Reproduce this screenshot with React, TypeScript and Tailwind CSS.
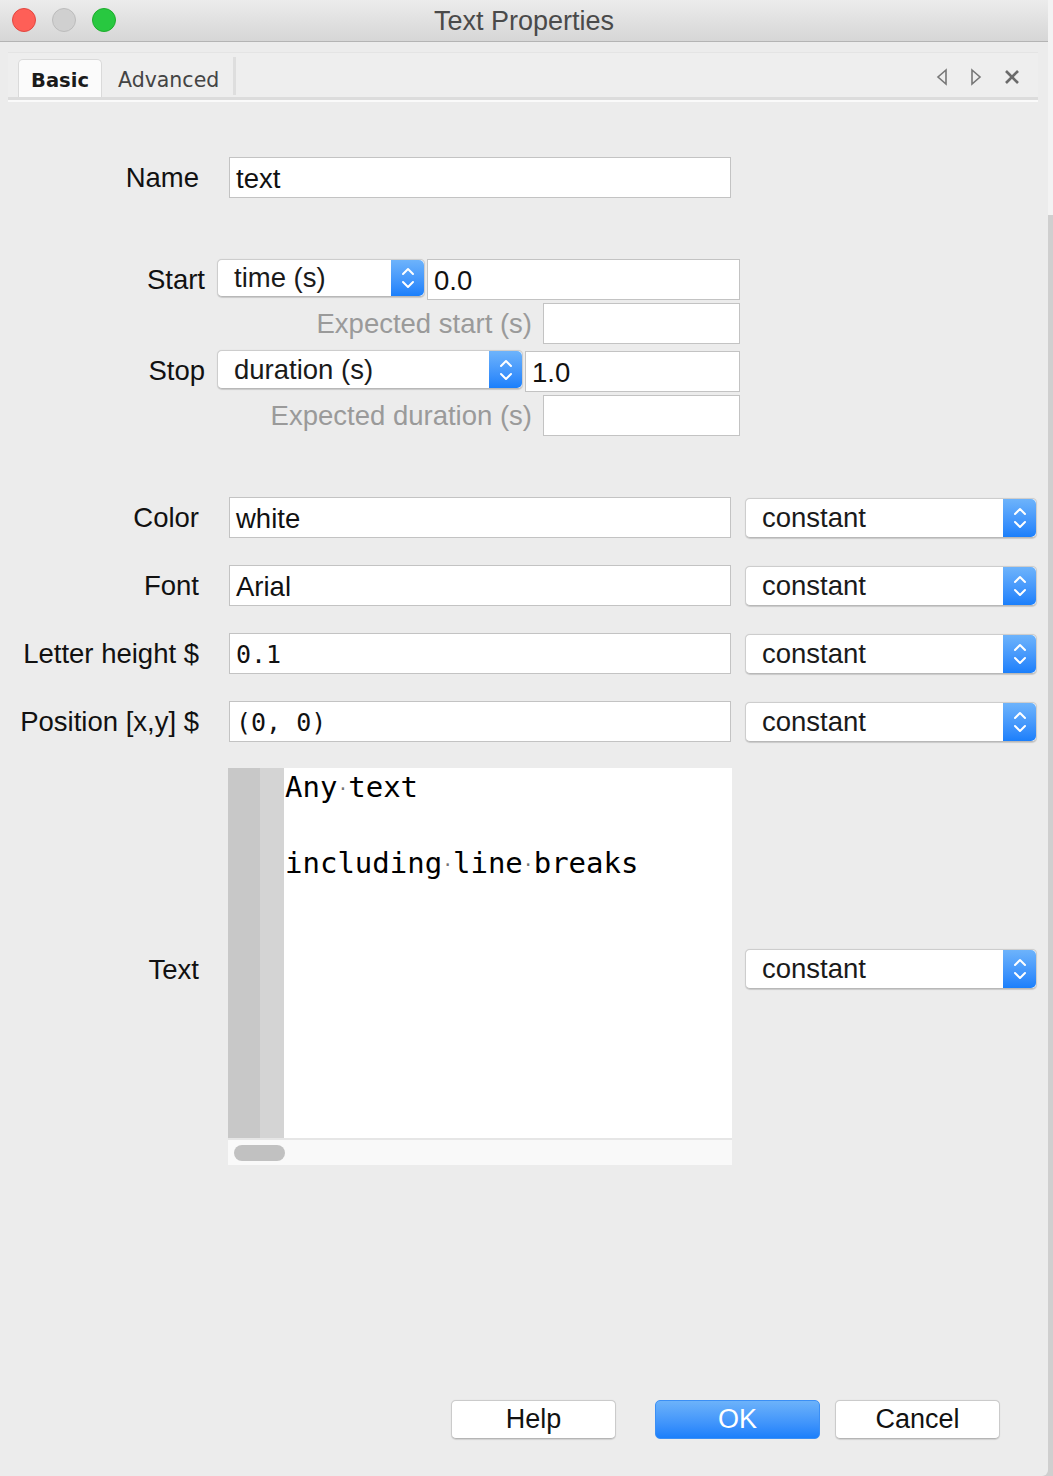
import React from "react";

const ui = "font-['Liberation_Sans','Helvetica',sans-serif]";
const mono = "font-['DejaVu_Sans_Mono','Liberation_Mono',monospace]";

function Stepper() {
  return (
    <div className="w-[33px] h-full flex items-center justify-center rounded-r-[5px] bg-gradient-to-b from-[#6db3fb] to-[#1a7ffb]">
      <svg width="14" height="24" viewBox="0 0 14 24" fill="none" stroke="white" strokeWidth="2" strokeLinecap="round" strokeLinejoin="round">
        <polyline points="2,8 7,3 12,8" />
        <polyline points="2,16 7,21 12,16" />
      </svg>
    </div>
  );
}

function Select({ label, w, h = 40 }: { label: string; w: number; h?: number }) {
  return (
    <div
      className="flex items-stretch bg-white rounded-[5px] border border-[#cdcdcd] border-b-[#b8b8b8] shadow-[0_0.5px_1px_rgba(0,0,0,0.15)] shrink-0"
      style={{ width: w, height: h }}
    >
      <div className="flex-1 flex items-center pl-[16px] text-[27.5px] text-[#1a1a1a]">{label}</div>
      <Stepper />
    </div>
  );
}

function Field({ value, w, monoFont = false }: { value: string; w: number; monoFont?: boolean }) {
  return (
    <div
      className={`h-[41px] bg-white border border-[#c3c3c3] flex items-center pl-[6px] text-[#111] shrink-0 ${monoFont ? mono + " text-[25px]" : "text-[27.5px]"}`}
      style={{ width: w }}
    >
      <span className="pt-[3px]">{value}</span>
    </div>
  );
}

function Row({ label, value, monoFont = false, top }: { label: string; value: string; monoFont?: boolean; top: string }) {
  return (
    <div className={`flex items-center ${top}`}>
      <div className="w-[199px] text-right text-[27.5px] leading-[32px] text-[#111] whitespace-nowrap">{label}</div>
      <div className="ml-[30px]">
        <Field value={value} w={502} monoFont={monoFont} />
      </div>
      <div className="ml-[14px]">
        <Select label="constant" w={292} />
      </div>
    </div>
  );
}

function Dot() {
  return <span className="text-[#777] text-[18px] leading-[0] align-middle">·</span>;
}

function Button({ label, primary = false }: { label: string; primary?: boolean }) {
  return (
    <div
      className={`w-[165px] h-[39px] rounded-[5px] flex items-center justify-center text-[27px] ${
        primary
          ? "bg-gradient-to-b from-[#6cb2fa] to-[#1a7ffb] text-white border border-[#3b8ff5]"
          : "bg-white text-[#111] border border-[#cbcbcb] border-b-[#b5b5b5] shadow-[0_0.5px_1px_rgba(0,0,0,0.12)]"
      }`}
    >
      {label}
    </div>
  );
}

export default function App() {
  return (
    <div className={`flex w-[1053px] h-[1476px] bg-[#cfcfcf] ${ui}`}>
      <div className="w-[1048px] h-full bg-[#ececec] flex flex-col rounded-br-[6px] overflow-hidden">
        {/* Title bar */}
        <div className="h-[42px] shrink-0 relative flex items-center justify-center bg-gradient-to-b from-[#ececec] to-[#d6d6d6] border-b border-[#b4b4b4]">
          <div className="absolute left-[12px] top-[8px] flex gap-[16px]">
            <div className="w-[24px] h-[24px] rounded-full bg-[#fe5f57] border border-[#e2463f]" />
            <div className="w-[24px] h-[24px] rounded-full bg-[#d0d0d0] border border-[#bcbcbc]" />
            <div className="w-[24px] h-[24px] rounded-full bg-[#28c840] border border-[#1dad2b]" />
          </div>
          <div className="text-[27px] text-[#4a4a4a] pt-[1px]">Text Properties</div>
        </div>

        {/* Tab bar */}
        <div className="mt-[10px] ml-[8px] w-[1030px] h-[48px] bg-[#eeeeee] border-t border-[#e4e4e4] flex items-end relative">
          <div className="flex items-end h-full w-full border-b-[3px] border-[#dcdcdc]">
            <div className="ml-[10px] w-[84px] h-[38px] bg-[#fbfbfb] border border-[#dadada] border-b-0 rounded-t-[5px] flex items-center justify-center pt-[4px] font-['DejaVu_Sans',sans-serif] font-bold text-[19.5px] text-[#1a1a1a]">
              Basic
            </div>
            <div className="ml-[16px] h-[38px] flex items-center pt-[4px] font-['DejaVu_Sans',sans-serif] text-[20.5px] text-[#444]">
              Advanced
            </div>
            <div className="ml-[14px] mb-[2px] w-[3px] h-[38px] bg-[#dedede]" />
            <div className="ml-auto mr-[18px] h-full flex items-center pt-[4px] gap-[22px] text-[#6e6e6e]">
              <svg width="12" height="18" viewBox="0 0 12 18" fill="none" stroke="#777" strokeWidth="1.6">
                <polygon points="10,2 2,9 10,16" />
              </svg>
              <svg width="12" height="18" viewBox="0 0 12 18" fill="none" stroke="#777" strokeWidth="1.6">
                <polygon points="2,2 10,9 2,16" />
              </svg>
              <svg width="16" height="16" viewBox="0 0 16 16" fill="none" stroke="#6a6a6a" strokeWidth="2.6">
                <line x1="2" y1="2" x2="14" y2="14" />
                <line x1="14" y1="2" x2="2" y2="14" />
              </svg>
            </div>
          </div>
          <div className="absolute left-0 right-0 -bottom-[2px] h-[2px] bg-[#fafafa]" />
        </div>

        {/* Name */}
        <div className="flex items-center mt-[57px]">
          <div className="w-[199px] text-right text-[27.5px] leading-[32px] text-[#111]">Name</div>
          <div className="ml-[30px]">
            <Field value="text" w={502} />
          </div>
        </div>

        {/* Start / Stop */}
        <div className="flex items-center mt-[61px]">
          <div className="w-[205px] text-right text-[27.5px] leading-[32px] text-[#111]">Start</div>
          <div className="ml-[12px] h-[41px] flex items-start">
            <Select label="time (s)" w={208} h={38} />
          </div>
          <div className="ml-[2px]">
            <Field value="0.0" w={313} />
          </div>
        </div>
        <div className="flex items-center mt-[3px]">
          <div className="w-[532px] text-right text-[27.5px] leading-[32px] text-[#9a9a9a]">Expected start (s)</div>
          <div className="ml-[11px]">
            <Field value="" w={197} />
          </div>
        </div>
        <div className="flex items-center mt-[6px]">
          <div className="w-[205px] text-right text-[27.5px] leading-[32px] text-[#111]">Stop</div>
          <div className="ml-[12px] h-[42px] flex items-start">
            <Select label="duration (s)" w={306} h={39} />
          </div>
          <div className="ml-[2px] self-end">
            <Field value="1.0" w={215} />
          </div>
        </div>
        <div className="flex items-center mt-[3px]">
          <div className="w-[532px] text-right text-[27.5px] leading-[32px] text-[#9a9a9a]">Expected duration (s)</div>
          <div className="ml-[11px]">
            <Field value="" w={197} />
          </div>
        </div>

        {/* Properties */}
        <Row label="Color" value="white" top="mt-[61px]" />
        <Row label="Font" value="Arial" top="mt-[27px]" />
        <Row label="Letter height $" value="0.1" monoFont top="mt-[27px]" />
        <Row label="Position [x,y] $" value="(0, 0)" monoFont top="mt-[27px]" />

        {/* Text */}
        <div className="flex items-center mt-[26px]">
          <div className="w-[199px] text-right text-[27.5px] leading-[32px] text-[#111] pt-[6px]">Text</div>
          <div className="ml-[29px] w-[504px] h-[397px] flex flex-col">
            <div className="flex-1 flex bg-white">
              <div className="w-[32px] bg-[#c8c8c8]" />
              <div className="w-[24px] bg-[#d4d4d4]" />
              <div className={`pl-[1px] ${mono} text-[29px] leading-[38px] text-black`}>
                <div className="h-[38px]">
                  Any<Dot />text
                </div>
                <div className="h-[38px]" />
                <div className="h-[38px]">
                  including<Dot />line<Dot />breaks
                </div>
              </div>
            </div>
            <div className="h-[27px] bg-[#f9f9f9] border-t-2 border-[#e6e6e6] flex items-center pl-[6px]">
              <div className="w-[51px] h-[16px] rounded-full bg-[#c1c1c1]" />
            </div>
          </div>
          <div className="ml-[13px] pt-[4px]">
            <Select label="constant" w={292} />
          </div>
        </div>

        {/* Buttons */}
        <div className="mt-auto mb-[37px] flex pl-[451px]">
          <Button label="Help" />
          <div className="ml-[39px]">
            <Button label="OK" primary />
          </div>
          <div className="ml-[15px]">
            <Button label="Cancel" />
          </div>
        </div>
      </div>

      {/* Background window strip */}
      <div className="flex-1 flex flex-col">
        <div className="h-[215px] bg-[#f3f3f3]" />
        <div className="flex-1 bg-[#cfcfcf]" />
      </div>
    </div>
  );
}
